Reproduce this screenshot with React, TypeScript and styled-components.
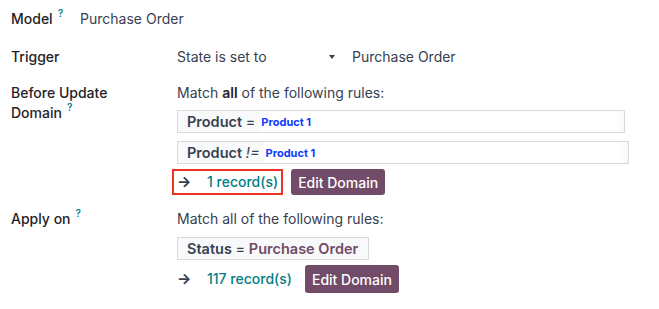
import React from 'react';
import styled, { createGlobalStyle } from "styled-components";

const purple = '#714b67';
const teal = '#017e84';

const Global = createGlobalStyle`
  body {
    margin: 0;
    background: #fff;
    font-family: Inter, "Noto Sans", sans-serif;
    font-size: 14px;
    color: #374151;
  }
`;

const App = () => (
  <>
    <Global/>
    <Page>
      <ModelRow>
        <Label>Model<Help>?</Help></Label>
        <Value>Purchase Order</Value>
      </ModelRow>

      <Row $top={18}>
        <Label>Trigger</Label>
        <TriggerField>
          <SelectText>State is set to</SelectText>
          <Caret/>
          <Value>Purchase Order</Value>
        </TriggerField>
      </Row>

      <Row $top={16}>
        <Label>Before Update<br/>Domain<Help>?</Help></Label>
        <Column>
          <Intro>Match <b>all</b> of the following rules:</Intro>
          <Rule $width={448} $top={7}>
            <RuleHead>Product <Op>=</Op></RuleHead>
            <Tag>Product 1</Tag>
          </Rule>
          <Rule $width={452} $top={8}>
            <RuleHead>Product <Op $italic>!=</Op></RuleHead>
            <Tag>Product 1</Tag>
          </Rule>
          <Records count="1 record(s)" highlight top={5}/>
        </Column>
      </Row>

      <Row $top={14}>
        <Label>Apply on<Help>?</Help></Label>
        <Column>
          <Intro>Match all of the following rules:</Intro>
          <Rule $top={8} $filled>
            <RuleHead>Status <Op>=</Op> <StateValue>Purchase Order</StateValue></RuleHead>
          </Rule>
          <Records count="117 record(s)" top={5} tall/>
        </Column>
      </Row>
    </Page>
  </>
);

const Records = (props: { count: string, highlight?: boolean, top: number, tall?: boolean }) => (
  <RecordsRow $top={props.top}>
    <RecordLink $highlight={props.highlight}>
      <Arrow>&#x2192;</Arrow>
      <Count>{props.count}</Count>
    </RecordLink>
    <EditButton $tall={props.tall}>Edit Domain</EditButton>
  </RecordsRow>
);

const Page = styled.div`
  padding: 9px 11px;
  width: 659px;
  box-sizing: border-box;
`;

const ModelRow = styled.div`
  display: flex;
  align-items: flex-start;
  gap: 17px;
  line-height: 20px;
`;

const Row = styled.div<{ $top: number }>`
  display: grid;
  grid-template-columns: 166px 1fr;
  margin-top: ${p => p.$top}px;
  line-height: 20px;
`;

const Label = styled.div`
  font-weight: 500;
  color: #1f2328;
`;

const Help = styled.span`
  display: inline-block;
  color: ${teal};
  font-size: 10px;
  line-height: 10px;
  font-weight: 600;
  margin-left: 5px;
  vertical-align: top;
  position: relative;
  top: -1px;
`;

const Value = styled.span`
  color: #374151;
`;

const TriggerField = styled.div`
  display: flex;
  align-items: center;
`;

const SelectText = styled.span`
  width: 152px;
`;

const Caret = styled.span`
  width: 0;
  height: 0;
  border-left: 3.5px solid transparent;
  border-right: 3.5px solid transparent;
  border-top: 4px solid #374151;
  margin-right: 17px;
`;

const Column = styled.div`
  display: flex;
  flex-direction: column;
  align-items: flex-start;
`;

const Intro = styled.div`
  b { font-weight: 600; color: #1f2328; }
`;

const Rule = styled.div<{ $width?: number, $top: number, $filled?: boolean }>`
  display: flex;
  align-items: stretch;
  box-sizing: border-box;
  width: ${p => p.$width ? `${p.$width}px` : 'auto'};
  height: 23px;
  margin-top: ${p => p.$top}px;
  padding-right: ${p => p.$filled ? '6px' : '0'};
  border: 1px solid #d8dadd;
  background: ${p => p.$filled ? '#f8f9fa' : 'linear-gradient(90deg, #fff 98%, #f7f8fa 100%)'};
`;

const RuleHead = styled.span`
  display: block;
  line-height: 21px;
  padding: 0 4px 0 9px;
  background: #f8f9fa;
  font-size: 14.5px;
  font-weight: 600;
  color: #374151;
  white-space: pre;
`;

const Op = styled.span<{ $italic?: boolean }>`
  font-weight: 400;
  font-style: ${p => p.$italic ? 'italic' : 'normal'};
`;

const Tag = styled.span`
  align-self: center;
  color: #0b3bff;
  font-size: 11px;
  line-height: 14px;
  font-weight: 700;
  margin-left: 2px;
`;

const StateValue = styled.span`
  color: ${purple};
  font-weight: 600;
`;

const RecordsRow = styled.div<{ $top: number }>`
  display: flex;
  align-items: center;
  gap: 13px;
  margin-top: ${p => p.$top}px;
`;

const RecordLink = styled.span<{ $highlight?: boolean }>`
  display: flex;
  align-items: center;
  height: 26px;
  position: relative;

  &::before {
    content: "";
    display: ${p => p.$highlight ? 'block' : 'none'};
    position: absolute;
    left: -5px;
    right: -5px;
    top: 0;
    bottom: 0;
    border: 2px solid #ee3322;
  }
`;

const Arrow = styled.span`
  font-size: 15px;
  font-weight: 700;
  color: #374151;
  width: 30px;
`;

const Count = styled.span`
  color: ${teal};
  font-weight: 500;
`;

const EditButton = styled.button<{ $tall?: boolean }>`
  height: ${p => p.$tall ? 28 : 26}px;
  padding: 0 7px;
  border: none;
  border-radius: 3px;
  background: ${purple};
  color: #fff;
  font-family: Inter, "Noto Sans", sans-serif;
  font-size: 14px;
  font-weight: 500;
`;

export default App;
